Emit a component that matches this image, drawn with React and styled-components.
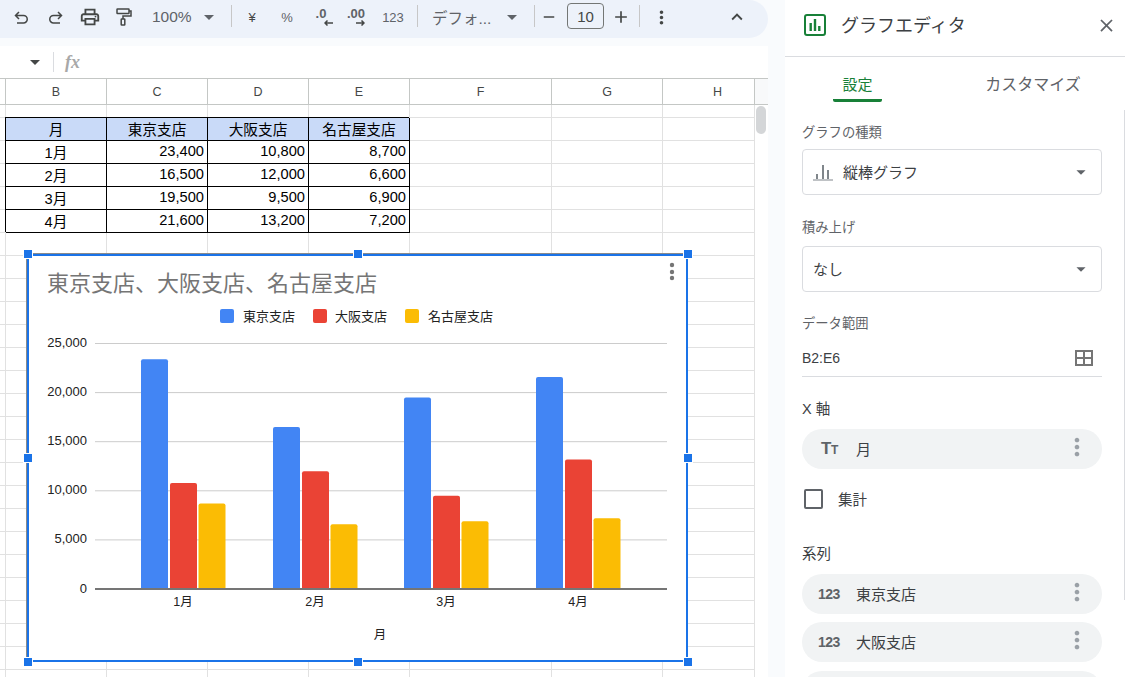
import React from "react";
import styled, { createGlobalStyle } from "styled-components";
import {
  MdOutlinePrint, MdArrowDropDown, MdMoreVert, MdExpandLess, MdRemove, MdAdd, MdClose,
} from "react-icons/md";

const FONT = `"Liberation Sans", "Noto Sans CJK JP", sans-serif`;

const GlobalStyle = createGlobalStyle`
  html, body { margin: 0; padding: 0; background: #f9fbfd; overflow: hidden; }
  * { box-sizing: border-box; }
`;

const Page = styled.div`
  display: flex;
  width: 1125px;
  height: 677px;
  overflow: hidden;
  gap: 17px;
  font-family: ${FONT};
  color: #444746;
`;

const Left = styled.div`
  width: 768px;
  flex: none;
  display: flex;
  flex-direction: column;
`;

const Toolbar = styled.div`
  height: 38px;
  flex: none;
  margin-bottom: 8px;
  padding: 0 0 6px 4px;
  display: flex;
  align-items: center;
  background: #edf2fa;
  border-radius: 0 19px 19px 0;
`;

const Tool = styled.div`
  width: ${(p) => p.$w}px;
  height: 32px;
  flex: none;
  margin-left: ${(p) => p.$ml || 0}px;
  padding-top: 2px;
  display: flex;
  align-items: center;
  justify-content: center;
  font-size: ${(p) => p.$size || 13}px;
  color: ${(p) => p.$color || "#444746"};
`;

const SelectTool = styled(Tool)`
  justify-content: space-between;
  padding: 2px 1px 0 ${(p) => p.$pad}px;
  font-size: 15.5px;
  color: #5f6368;
`;

const Sep = styled.div`
  width: 1px;
  height: 22px;
  flex: none;
  margin: 0 ${(p) => p.$r || 0}px 0 ${(p) => p.$l || 0}px;
  background: #c7c7c7;
`;

const SizeBox = styled.div`
  width: 37px;
  height: 26px;
  flex: none;
  margin: 0 3px 0 4px;
  display: flex;
  align-items: center;
  justify-content: center;
  border: 1px solid #747775;
  border-radius: 4px;
  font-size: 15px;
`;

const Decimal = styled.div`
  display: flex;
  flex-direction: column;
  align-items: flex-end;
  line-height: 11px;
  font-size: 13px;
  font-weight: 700;
  color: #5f6368;
  svg { margin: 1px ${(p) => p.$shift || 0}px 0 0; }
`;

const FormulaBar = styled.div`
  height: 32px;
  flex: none;
  display: flex;
  align-items: center;
  padding-left: 30px;
  background: #fff;
  color: #444746;
`;

const FormulaSep = styled.div`
  width: 1px;
  height: 20px;
  margin: 0 11px 0 13px;
  background: #dadce0;
`;

const Fx = styled.span`
  font-family: "Liberation Serif", serif;
  font-style: italic;
  font-weight: 700;
  font-size: 18px;
  color: #a8a8a8;
`;

const Sheet = styled.div`
  flex: 1;
  display: flex;
  flex-direction: column;
  background: #fff;
  position: relative;
  overflow: hidden;
`;

const ColumnHeads = styled.div`
  height: 27px;
  flex: none;
  display: grid;
  grid-template-columns: 6px 101px 101px 101px 101px 142px 111px 92px 13px;
  border-top: 1px solid #c4c7c5;
  border-bottom: 1px solid #c4c7c5;
`;

const ColumnHead = styled.div`
  display: flex;
  align-items: center;
  justify-content: center;
  padding-left: ${(p) => p.$pad || 0}px;
  border-right: 1px solid #c4c7c5;
  font-size: 12.5px;
  color: #444746;
`;

const HeadCorner = styled.div`
  background: #f8f9fa;
`;

const GridArea = styled.div`
  flex: 1;
  display: flex;
  overflow: hidden;
`;

const Grid = styled.div`
  width: 755px;
  flex: none;
  display: grid;
  grid-template-columns: 6px 101px 101px 101px 101px 142px 111px 92px;
  grid-template-rows: 13px;
  grid-auto-rows: 23px;
`;

const Cell = styled.div`
  border-right: 1px solid #e1e1e1;
  border-bottom: 1px solid #e1e1e1;
`;

const DataCell = styled.div`
  display: flex;
  align-items: center;
  justify-content: ${(p) => (p.$right ? "flex-end" : "center")};
  padding: 0 ${(p) => (p.$right ? "3px" : "0")} 2px 0;
  border-right: 1px solid #000;
  border-bottom: 1px solid #000;
  box-shadow: -1px -1px 0 0 #000;
  background: ${(p) => (p.$head ? "#c9daf8" : "#fff")};
  color: #000;
  font-size: 14.67px;
  white-space: nowrap;
`;

const ScrollTrack = styled.div`
  flex: 1;
  padding: 1px 2px 0 1px;
`;

const ScrollThumb = styled.div`
  height: 28px;
  border-radius: 5px;
  background: #d4d6d8;
`;

const ChartFrame = styled.div`
  position: absolute;
  left: 27px;
  top: 176px;
  width: 661px;
  height: 408px;
  background: #fff;
  border: 2px solid #1a73e8;
  box-shadow: -1px -1px 0 0 #8a8a8a;
`;

const Handle = styled.div`
  position: absolute;
  width: 8px;
  height: 8px;
  left: ${(p) => p.$x}px;
  top: ${(p) => p.$y}px;
  background: #1a73e8;
  box-shadow: 0 0 0 1px #fff;
`;

const ChartSvg = styled.svg`
  display: block;
  font-family: ${FONT};
`;

const Panel = styled.div`
  flex: 1;
  height: 677px;
  background: #fff;
  position: relative;
  overflow: hidden;
`;

const PanelHead = styled.div`
  height: 57px;
  display: flex;
  align-items: center;
  padding: 0 8px 6px 19px;
  border-bottom: 1px solid #dadce0;
`;

const PanelTitle = styled.div`
  flex: 1;
  margin-left: 15px;
  padding-bottom: 2px;
  font-size: 18px;
  color: #3c4043;
`;

const Tabs = styled.div`
  height: 45px;
  display: flex;
`;

const Tab = styled.div`
  width: ${(p) => p.$w}px;
  margin-left: ${(p) => p.$l}px;
  height: 45px;
  display: flex;
  align-items: center;
  justify-content: center;
  padding-top: 10px;
  font-size: ${(p) => p.$size}px;
  white-space: nowrap;
  color: ${(p) => (p.$active ? "#188038" : "#5f6368")};
  border-bottom: 3px solid ${(p) => (p.$active ? "#188038" : "transparent")};
  border-radius: 0 0 2px 2px;
`;

const Edge = styled.div`
  position: absolute;
  right: 0;
  top: 110px;
  width: 1px;
  height: 490px;
  background: #dadce0;
`;

const Body = styled.div`
  padding: 20px 23px 0 17px;
  display: flex;
  flex-direction: column;
`;

const Label = styled.div`
  height: 18px;
  display: flex;
  align-items: center;
  font-size: 13.3px;
  color: #5f6368;
  margin-bottom: ${(p) => p.$mb || 0}px;
`;

const SectionLabel = styled(Label)`
  font-size: 14.5px;
  padding-bottom: 2px;
  color: #3c4043;
`;

const SelectBox = styled.div`
  height: 46px;
  margin-bottom: ${(p) => p.$mb}px;
  display: flex;
  align-items: center;
  padding: 0 9px 0 10px;
  border: 1px solid #dadce0;
  border-radius: 4px;
  font-size: 15px;
  color: #3c4043;
`;

const SelectText = styled.div`
  flex: 1;
  margin-left: ${(p) => p.$l || 0}px;
  padding-bottom: 1px;
`;

const RangeRow = styled.div`
  height: 44px;
  margin: 2px 0 22px;
  padding: 7px 9px 0 0;
  display: flex;
  align-items: center;
  justify-content: space-between;
  border-bottom: 1px solid #dadce0;
  font-size: 14px;
  color: #3c4043;
`;

const Pill = styled.div`
  height: 40px;
  flex: none;
  margin-bottom: ${(p) => p.$mb}px;
  display: flex;
  align-items: center;
  padding-left: ${(p) => p.$pad || 16}px;
  border-radius: 20px;
  background: #f1f3f4;
  font-size: 15px;
  color: #3c4043;
`;

const PillIcon = styled.div`
  width: ${(p) => p.$w || 38}px;
  flex: none;
  font-weight: 700;
  color: #5f6368;
  font-size: ${(p) => p.$size}px;
  letter-spacing: -0.5px;
`;

const PillText = styled.div`
  flex: 1;
  padding-bottom: 2px;
`;

const SmallCap = styled.span`
  font-size: 12px;
`;

const PillDots = styled.div`
  display: flex;
  margin: -4px 11px 0 0;
  color: #9aa0a6;
`;

const CheckRow = styled.div`
  height: 20px;
  margin-bottom: 35px;
  padding-left: 2px;
  display: flex;
  align-items: center;
  gap: 15px;
  font-size: 14.5px;
  color: #3c4043;
`;

const CheckText = styled.span`
  padding-bottom: 2px;
`;

const CheckBox = styled.div`
  width: 19px;
  height: 20px;
  border: 2px solid #5f6368;
  border-radius: 2px;
`;

const COLS = ["B", "C", "D", "E", "F", "G"];
const TABLE = [
  ["月", "東京支店", "大阪支店", "名古屋支店"],
  ["1月", 23400, 10800, 8700],
  ["2月", 16500, 12000, 6600],
  ["3月", 19500, 9500, 6900],
  ["4月", 21600, 13200, 7200],
];
const SERIES = [
  { name: "東京支店", color: "#4285f4", labelX: 243, boxX: 220 },
  { name: "大阪支店", color: "#ea4335", labelX: 335, boxX: 313 },
  { name: "名古屋支店", color: "#fbbc04", labelX: 428, boxX: 405 },
];
const GROUP_X = [141, 273, 404, 536];
const BASE_Y = 589;
const yFor = (v) => BASE_Y - (v / 25000) * 245.5;

const DOTS = [[-5, -6], [325, -6], [655, -6], [-5, 198], [655, 198], [-5, 402], [325, 402], [655, 402]];

const UndoIcon = () => (
  <svg width="15" height="13" viewBox="0 0 15 13" fill="none" stroke="currentColor" strokeWidth="1.5">
    <path d="M5 1L1.5 4.5 5 8M2 4.5h7.5a3.5 3.5 0 0 1 0 7.5H3" />
  </svg>
);

const RedoIcon = () => (
  <svg width="15" height="13" viewBox="0 0 15 13" fill="none" stroke="currentColor" strokeWidth="1.5">
    <path d="M10 1l3.5 3.5L10 8M13 4.5H5.5a3.5 3.5 0 0 0 0 7.5H12" />
  </svg>
);

const RollerIcon = () => (
  <svg width="16" height="18" viewBox="0 0 16 18" fill="none" stroke="currentColor" strokeWidth="1.5">
    <rect x="1" y="1" width="12" height="4.5" rx="0.5" />
    <path d="M13 3h2v5H7v3" />
    <rect x="5.2" y="11" width="3.6" height="6" rx="0.5" />
  </svg>
);

const ArrowLeft = () => (
  <svg width="9" height="6" viewBox="0 0 9 6" fill="none" stroke="#444746" strokeWidth="1.5">
    <path d="M9 3H1M3.5 .5L1 3l2.5 2.5" />
  </svg>
);

const ArrowRight = () => (
  <svg width="9" height="6" viewBox="0 0 9 6" fill="none" stroke="#444746" strokeWidth="1.5">
    <path d="M0 3h8M5.5 .5L8 3 5.5 5.5" />
  </svg>
);

const GridCells = () => {
  const cells = [];
  for (let r = 0; r < 26; r++) {
    for (let c = 0; c < 8; c++) {
      const row = TABLE[r - 1];
      if (row && c >= 1 && c <= 4) {
        const v = row[c - 1];
        const isNum = typeof v === "number";
        cells.push(
          <DataCell key={r + "-" + c} $head={r === 1} $right={isNum}>
            {isNum ? v.toLocaleString("en-US") : v}
          </DataCell>
        );
      } else {
        cells.push(<Cell key={r + "-" + c} />);
      }
    }
  }
  return cells;
};

const Chart = () => (
  <ChartSvg width="657" height="404" viewBox="29 256 657 404">
    <text x="47" y="291" fontSize="22" fill="#757575">東京支店、大阪支店、名古屋支店</text>
    {SERIES.map((s) => (
      <g key={s.name}>
        <rect x={s.boxX} y="309" width="14" height="14" rx="2" fill={s.color} />
        <text x={s.labelX} y="321" fontSize="13" fill="#222">{s.name}</text>
      </g>
    ))}
    {[5000, 10000, 15000, 20000, 25000].map((v) => (
      <line key={v} x1="95" x2="667" y1={yFor(v)} y2={yFor(v)} stroke="#ccc" strokeWidth="1" />
    ))}
    {[0, 5000, 10000, 15000, 20000, 25000].map((v) => (
      <text key={v} x="87" y={yFor(v) + 3.5} textAnchor="end" fontSize="13" fill="#222">
        {v.toLocaleString("en-US")}
      </text>
    ))}
    {TABLE.slice(1).map((row, g) => (
      <g key={row[0]}>
        {SERIES.map((s, i) => {
          const top = yFor(row[i + 1]);
          const x = GROUP_X[g] + i * 28.5 + (i ? 0.5 : 0);
          return (
            <path
              key={s.name}
              d={`M${x} ${BASE_Y}V${top + 2}q0 -2 2 -2H${x + 25}q2 0 2 2V${BASE_Y}Z`}
              fill={s.color}
            />
          );
        })}
        <text x={GROUP_X[g] + 42} y="606" textAnchor="middle" fontSize="12.5" fill="#222">{row[0]}</text>
      </g>
    ))}
    <line x1="95" x2="667" y1={BASE_Y} y2={BASE_Y} stroke="#757575" strokeWidth="2" />
    <text x="380" y="639" textAnchor="middle" fontSize="12.5" fill="#222">月</text>
    <circle cx="672" cy="265" r="2.2" fill="#757575" />
    <circle cx="672" cy="272" r="2.2" fill="#757575" />
    <circle cx="672" cy="278" r="2.2" fill="#757575" />
  </ChartSvg>
);

const App = () => (
  <Page>
    <GlobalStyle />
    <Left>
      <Toolbar>
        <Tool $w={34}><UndoIcon /></Tool>
        <Tool $w={34}><RedoIcon /></Tool>
        <Tool $w={35}><MdOutlinePrint size={22} /></Tool>
        <Tool $w={34}><RollerIcon /></Tool>
        <SelectTool $w={81} $pad={11}>100%<MdArrowDropDown size={24} /></SelectTool>
        <Sep $l={9} $r={2} />
        <Tool $w={36} $size={13}>¥</Tool>
        <Tool $w={34} $size={13} $color="#5f6368">%</Tool>
        <Tool $w={34}>
          <Decimal $shift={-7}>.0<ArrowLeft /></Decimal>
        </Tool>
        <Tool $w={36}>
          <Decimal>.00<ArrowRight /></Decimal>
        </Tool>
        <Tool $w={38} $size={13} $color="#5f6368">123</Tool>
        <Sep $l={5} />
        <SelectTool $w={107} $pad={14}>デフォ...<MdArrowDropDown size={24} /></SelectTool>
        <Sep $l={9} />
        <Tool $w={28}><MdRemove size={18} /></Tool>
        <SizeBox>10</SizeBox>
        <Tool $w={28}><MdAdd size={20} /></Tool>
        <Sep $l={4} />
        <Tool $w={42}><MdMoreVert size={21} /></Tool>
        <Tool $w={28} $ml={41}><MdExpandLess size={22} /></Tool>
      </Toolbar>
      <FormulaBar>
        <svg width="10" height="5" viewBox="0 0 10 5"><path d="M0 0h10L5 5z" fill="#444746" /></svg>
        <FormulaSep />
        <Fx>fx</Fx>
      </FormulaBar>
      <Sheet>
        <ColumnHeads>
          <ColumnHead />
          {COLS.map((c) => <ColumnHead key={c}>{c}</ColumnHead>)}
          <ColumnHead $pad={18}>H</ColumnHead>
          <HeadCorner />
        </ColumnHeads>
        <GridArea>
          <Grid><GridCells /></Grid>
          <ScrollTrack><ScrollThumb /></ScrollTrack>
        </GridArea>
        <ChartFrame>
          <Chart />
          {DOTS.map(([x, y]) => <Handle key={x + "," + y} $x={x} $y={y} />)}
        </ChartFrame>
      </Sheet>
    </Left>
    <Panel>
      <PanelHead>
        <svg width="22" height="22" viewBox="0 0 22 22">
          <rect x="1" y="1" width="20" height="20" rx="2" fill="none" stroke="#188038" strokeWidth="2" />
          <path d="M5.5 9h2.4v8H5.5zM9.8 5h2.4v12H9.8zM14.1 12h2.4v5h-2.4z" fill="#188038" />
        </svg>
        <PanelTitle>グラフエディタ</PanelTitle>
        <MdClose size={21} color="#5f6368" />
      </PanelHead>
      <Tabs>
        <Tab $l={48} $w={49} $size={15} $active>設定</Tab>
        <Tab $l={96} $w={110} $size={16}>カスタマイズ</Tab>
      </Tabs>
      <Edge />
      <Body>
        <Label $mb={9}>グラフの種類</Label>
        <SelectBox $mb={22}>
          <svg width="20" height="18" viewBox="0 0 20 18">
            <path d="M0 16.5h20v1H0zM3 11h2v5H3zM9 2h2v14H9zM14 7h2v9h-2z" fill="#80868b" />
          </svg>
          <SelectText $l={10}>縦棒グラフ</SelectText>
          <MdArrowDropDown size={22} color="#5f6368" />
        </SelectBox>
        <Label $mb={11}>積み上げ</Label>
        <SelectBox $mb={21}>
          <SelectText>なし</SelectText>
          <MdArrowDropDown size={22} color="#5f6368" />
        </SelectBox>
        <Label>データ範囲</Label>
        <RangeRow>
          B2:E6
          <svg width="18" height="16" viewBox="0 0 18 16">
            <path d="M0 0h18v16H0zM2 2v5h6V2zm8 0v5h6V2zM2 9v5h6V9zm8 0v5h6V9z" fill="#757575" fillRule="evenodd" />
          </svg>
        </RangeRow>
        <SectionLabel $mb={12}>X 軸</SectionLabel>
        <Pill $mb={20} $pad={19}>
          <PillIcon $size={17} $w={35}>T<SmallCap>T</SmallCap></PillIcon>
          <PillText>月</PillText>
          <PillDots><MdMoreVert size={28} /></PillDots>
        </Pill>
        <CheckRow><CheckBox /><CheckText>集計</CheckText></CheckRow>
        <SectionLabel $mb={12}>系列</SectionLabel>
        <Pill $mb={8}>
          <PillIcon $size={14}>123</PillIcon>
          <PillText>東京支店</PillText>
          <PillDots><MdMoreVert size={28} /></PillDots>
        </Pill>
        <Pill $mb={9}>
          <PillIcon $size={14}>123</PillIcon>
          <PillText>大阪支店</PillText>
          <PillDots><MdMoreVert size={28} /></PillDots>
        </Pill>
        <Pill $mb={0} />
      </Body>
    </Panel>
  </Page>
);

export default App;
